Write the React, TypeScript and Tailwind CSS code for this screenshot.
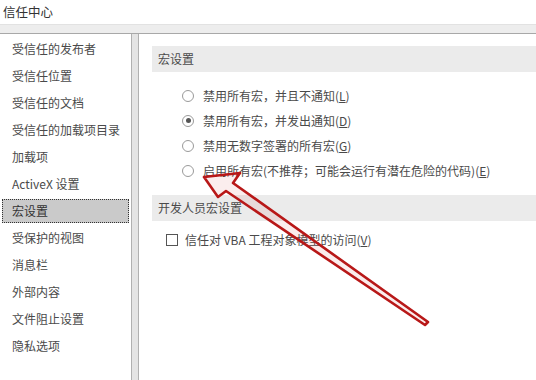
import React from 'react';

const NAV = ["受信任的发布者", "受信任位置", "受信任的文档", "受信任的加载项目录", "加载项", "ActiveX 设置", "宏设置", "受保护的视图", "消息栏", "外部内容", "文件阻止设置", "隐私选项"];

const OPTIONS = [
  { label: "禁用所有宏，并且不通知", key: "L", checked: false },
  { label: "禁用所有宏，并发出通知", key: "D", checked: true },
  { label: "禁用无数字签署的所有宏", key: "G", checked: false },
  { label: "启用所有宏(不推荐；可能会运行有潜在危险的代码)", key: "E", checked: false },
];

const Radio = ({ checked }: { checked: boolean }) => (
  <span className="w-[12px] h-[12px] rounded-full border border-[#9a9a9a] bg-white flex items-center justify-center">
    {checked && <span className="w-[5px] h-[5px] rounded-full bg-[#555]" />}
  </span>
);

export default function App() {
  return (
    <div
      className="relative w-[536px] h-[380px] bg-white text-[12px] text-[#4a4a4a] overflow-hidden flex flex-col"
      style={{ fontFamily: '"Noto Sans CJK SC", "Noto Sans", sans-serif' }}
    >
      <div className="h-[24px] flex items-center pl-[3px] text-[12.5px] text-[#333]">信任中心</div>
      <div className="h-[10px] bg-[#ededed] border-t border-[#e2e2e2] border-b border-b-[#a8a8a8]" />

      <div className="flex flex-1">
        <div className="w-[131px] pt-[1px]">
          {NAV.map(n => (
            <div key={n} className="h-[27px] flex items-center px-[2px]">
              <div
                className={
                  "w-full h-[24px] flex items-center pl-[9px] " +
                  (n === "宏设置" ? "bg-[#cacaca] border border-dotted border-[#333] text-[#333]" : "border border-transparent")
                }
              >
                {n}
              </div>
            </div>
          ))}
        </div>

        <div className="w-[8px] bg-[#e4e4e4] border-x border-[#b0b0b0]" />

        <div className="flex-1 pl-[13px] pt-[12px]">
          <div className="h-[26px] bg-[#ebebeb] flex items-center pl-[6px]">宏设置</div>
          <div className="mt-[11px] pl-[30px]">
            {OPTIONS.map(o => (
              <div key={o.key} className="h-[25px] flex items-center gap-[9px]">
                <Radio checked={o.checked} />
                <span>
                  {o.label}(<span className="underline">{o.key}</span>)
                </span>
              </div>
            ))}
          </div>
          <div className="mt-[12px] h-[26px] bg-[#ebebeb] flex items-center pl-[6px]">开发人员宏设置</div>
          <div className="mt-[12px] pl-[14px] h-[14px] flex items-center gap-[7px]">
            <span className="w-[12px] h-[12px] border border-[#555] bg-white" />
            <span>
              信任对 VBA 工程对象模型的访问(<span className="underline">V</span>)
            </span>
          </div>
        </div>
      </div>

      {/* hand-drawn red arrow pointing at the last option */}
      <svg className="absolute left-0 top-0" width="536" height="380" viewBox="0 0 536 380">
        <path
          d="M204 177 L240 173 L233 183 L428 322 L425 325 L226 191 L218 197 Z"
          fill="rgba(200,30,30,0.08)"
          stroke="#b81818"
          strokeWidth="2.6"
          strokeLinejoin="round"
        />
      </svg>
    </div>
  );
}
